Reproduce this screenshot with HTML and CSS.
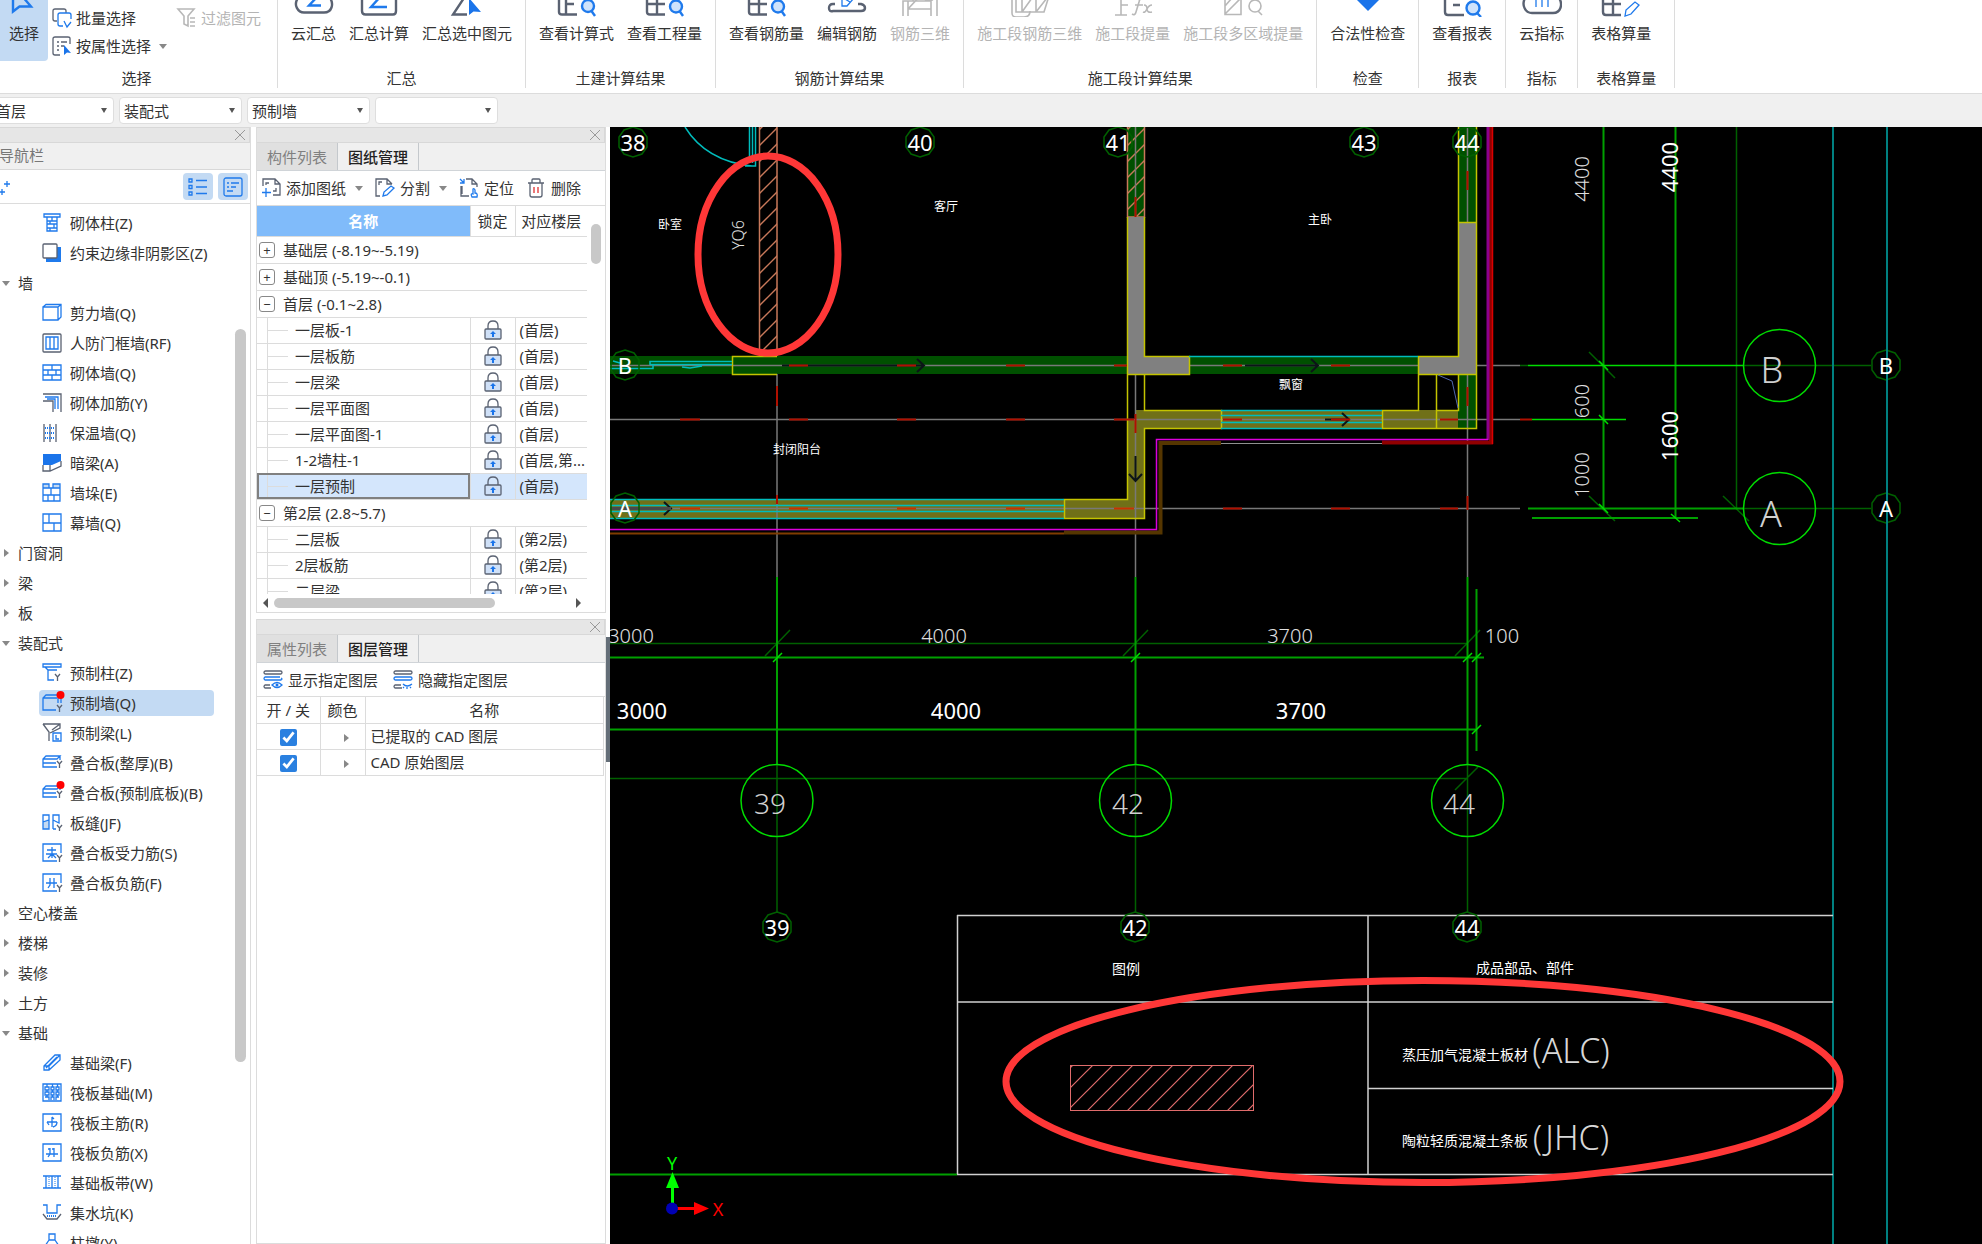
FILE: index.html
```html
<!DOCTYPE html>
<html lang="zh-CN">
<head>
<meta charset="utf-8">
<title>装配式算量 - 图纸管理</title>
<link rel="stylesheet" href="styles.css">
</head>
<body>
<svg class="sprite" aria-hidden="true">
  <!-- ribbon -->
  <symbol id="r-select" viewBox="0 0 36 17"><path d="M7 -10V11.500L13.500 6.500H25L16 -4" class="b2"/></symbol>
  <symbol id="r-cloud" viewBox="0 0 40 17"><path d="M4 -2C-1 5 4 12.500 10 12.500H30C38 12.500 40 4 36 -2" class="g2"/><path d="M24 -4L15 5.500H27" class="b2"/></symbol>
  <symbol id="r-sum" viewBox="0 0 40 17"><path d="M3 -2V11Q3 14.500 6.500 14.500H34Q37 14.500 37 11V-2" class="g2"/><path d="M22 -4L12 7H28" class="b2"/></symbol>
  <symbol id="r-pick" viewBox="0 0 40 17"><path d="M17 -2L6 14.500H20" class="g2"/><path d="M22 -2V15L26.500 11.500L34 12Z" class="bf"/></symbol>
  <symbol id="r-calc" viewBox="0 0 40 17"><path d="M2 -2V12Q2 14.500 5 14.500H20M9 -2V14M9 4H17" class="g2"/><circle cx="31" cy="6" r="6" class="lens"/><path d="M34.500 11L38 16" class="b2"/></symbol>
  <symbol id="r-grid" viewBox="0 0 40 17"><path d="M2 -2V12Q2 14.500 5 14.500H20M12 -2V14M2 4H20" class="g2"/><circle cx="31" cy="6.500" r="6" class="lens"/><path d="M34.500 11L38 16" class="b2"/></symbol>
  <symbol id="r-edit" viewBox="0 0 40 17"><path d="M8 4H6Q2 4 2 8T6 11H34Q38 11 38 8T34 4H31" class="g2"/><path d="M15 -2V6H20L27 -2M18 -1L23 2" class="b1"/></symbol>
  <symbol id="r-3d" viewBox="0 0 40 17"><path d="M3 16V1H31L37 -4M8 16V1M13 1V-4L31 1M31 16V1M37 16V-4M8 9H31M8 9L20 -4" class="d1"/></symbol>
  <symbol id="r-seg3d" viewBox="0 0 40 17"><path d="M2 -2V13Q2 17 6 17H14Q20 17 20 11M6 -2V12H34L39 -4M12 12V-2M26 12V-2M12 12L22 -2M26 12L37 -2" class="d1"/></symbol>
  <symbol id="r-fx" viewBox="0 0 40 17"><path d="M2 15H14M8 15V-2M8 5H15M31 -1Q27 -3 26 2L23 12Q22 16 19 14M22 5H30M31 5Q34 5 34 9T39 12M39 5Q36 5 34 9T30 12" class="d1"/></symbol>
  <symbol id="r-multi" viewBox="0 0 40 17"><path d="M2 -2V14.500H18V-2M2 14L18 -2M2 6L9 -2" class="d1"/><circle cx="32" cy="6" r="6" class="d1"/><path d="M35 11L39 15" class="d1"/></symbol>
  <symbol id="r-check" viewBox="0 0 40 17"><path d="M9 0L20 11L31 0Z" class="bf"/></symbol>
  <symbol id="r-report" viewBox="0 0 40 17"><path d="M3 -2V12Q3 15 6 15H22M11 5H18" class="g2"/><circle cx="31" cy="8" r="6.500" class="lens"/><path d="M35 13L39 17" class="b2"/></symbol>
  <symbol id="r-index" viewBox="0 0 40 17"><path d="M3 -2C-1 6 4 13 10 13H31C39 13 41 4 37 -2" class="g2"/><path d="M14 -2V7M20 -2V7M26 -2V7" class="b1"/></symbol>
  <symbol id="r-table" viewBox="0 0 40 17"><path d="M2 -2V12Q2 15 5 15H20M12 -2V14M2 4H20" class="g2"/><path d="M24 16L25 10L34 2L38 5L30 14Z" class="b1"/></symbol>
  <symbol id="s-batch" viewBox="0 0 20 20"><path d="M14 5V3Q14 1 12 1H3Q1 1 1 3V11Q1 13 3 13H5" class="g1"/><path d="M19 11V7Q19 5 17 5H8Q6 5 6 7V16Q6 18 8 18H11M12 13L15 19L19 14" class="b1"/></symbol>
  <symbol id="s-prop" viewBox="0 0 20 20"><path d="M18 8V2.500Q18 1 16 1H3Q1 1 1 3V17Q1 19 3 19H8M5 6H7M9 6H15M5 10H7M9 10H12M5 14H7" class="g1"/><path d="M12 9V19L15 16.500L19 17Z" class="bf"/></symbol>
  <symbol id="s-filter" viewBox="0 0 20 20"><path d="M1 1H17L11 8V18L7 16V8ZM13 10H18M13 14H18M13 18H18" class="d1"/></symbol>
  <!-- drawing toolbar -->
  <symbol id="t-add" viewBox="0 0 20 20"><path d="M2 8V1H14L19 6V17H12M14 1V6H19M5 7V5H8M15 10V13H12" class="g1"/><path d="M5 10V19M1 14.500H10" class="b1"/></symbol>
  <symbol id="t-split" viewBox="0 0 20 20"><path d="M5 18H1V1H12L17 6M12 1V6H17M4 7V4H7" class="g1"/><path d="M8 18L9 14L16 8L19 10L12 17Z" class="b1"/></symbol>
  <symbol id="t-locate" viewBox="0 0 20 20"><path d="M7 1H13L18 6V9M13 1V6H18M2 8V18H10M3 8V16" class="g1"/><path d="M1 1L5 5M5 1V5H1M13 19Q11 15 14 16V11Q15 10 16 12V15Q19 15 18 19Z" class="b1"/></symbol>
  <symbol id="t-del" viewBox="0 0 20 20"><path d="M2 5H18M6 5V2Q6 1 7 1H13Q14 1 14 2V5M4 5V17Q4 19 6 19H14Q16 19 16 17V5" class="g1"/><path d="M8 9V15M12 9V15" class="red"/></symbol>
  <symbol id="t-show" viewBox="0 0 20 20"><rect x="1" y="1" width="18" height="3" rx="1.500" class="g1"/><path d="M18 8Q20 9 18 10H2Q0 8.500 2 7H17" class="b1"/><path d="M8 18H2Q0 16.500 2 15H7" class="g1"/><path d="M9 15Q14 10 19 15Q14 20 9 15Z" class="b1"/><circle cx="14" cy="15" r="1.500" class="bf"/></symbol>
  <symbol id="t-hide" viewBox="0 0 20 20"><rect x="1" y="1" width="18" height="3" rx="1.500" class="g1"/><rect x="1" y="7" width="18" height="3" rx="1.500" class="b1"/><path d="M9 18H2Q0 16.500 2 15H8" class="g1"/><path d="M10 14Q14 18 19 14M11 17L10 18M14 17V19M17 17L18 18" class="b1"/></symbol>
  <symbol id="lock" viewBox="0 0 20 20"><path d="M5 9V6Q5 1 10 1T15 6V9" class="g1"/><rect x="2" y="9" width="16" height="10" rx="1" class="lockbox"/><path d="M10 11L13 14H11V17H9V14H7Z" class="bf"/></symbol>
  <!-- component tree -->
  <symbol id="n-col" viewBox="0 0 20 20"><path d="M2 1H18V4H2ZM5 4V18H15V4M5 8H15M5 11H15M5 15H15M10 4V8M8 8V11M12 11V15M8 15V18" class="b1"/></symbol>
  <symbol id="n-edge" viewBox="0 0 20 20"><path d="M17 4V17H4" class="bedge"/><rect x="1" y="1" width="14" height="14" rx="1" class="g1w"/></symbol>
  <symbol id="n-wall" viewBox="0 0 20 20"><path d="M1 4H16V17H1ZM1 4L4 1.500H19V14L16 17M16 4L19 1.500" class="b1"/></symbol>
  <symbol id="n-door" viewBox="0 0 20 20"><rect x="1" y="1" width="18" height="18" rx="1" class="g1"/><path d="M4 4H16V16H4ZM8 4V16M12 4V16" class="b1"/></symbol>
  <symbol id="n-brick" viewBox="0 0 20 20"><path d="M1 2H19V17H1ZM1 7H19M1 12H19M10 2V7M6 7V12M14 7V12M10 12V17" class="b1"/></symbol>
  <symbol id="n-rebar" viewBox="0 0 20 20"><path d="M1 1H19V19M1 8H11V19" class="g1"/><path d="M3 4H16V16M5 6H13V16" class="b1"/></symbol>
  <symbol id="n-insul" viewBox="0 0 20 20"><path d="M2 1V19M8 1V19M14 1V19" class="g1"/><path d="M3 5H13M3 10H13M3 15H13" class="bdot"/></symbol>
  <symbol id="n-beam" viewBox="0 0 20 20"><path d="M1 1H19V8L10 12H1Z" class="bf"/><path d="M1 12V18H8L19 13V8M8 18V12" class="g1"/></symbol>
  <symbol id="n-stack" viewBox="0 0 20 20"><path d="M1 1H7V5H1ZM11 1H18V5H11Z" class="bl"/><path d="M1 5V18H18V1H11V5H7V1H1V5H18M1 12H18M9 5V12M6 12V18M12 12V18" class="b1"/></symbol>
  <symbol id="n-curtain" viewBox="0 0 20 20"><path d="M1 1H19V18H1ZM1 10H19M7 1V10M12 10V18" class="b1"/></symbol>
  <symbol id="n-pcol" viewBox="0 0 20 20"><path d="M1 1H19V4H1ZM3 4L6 7H15M6 7V17H12" class="b1"/><path d="M13 11L15.500 14L18 11M15.500 14V18" class="g1"/></symbol>
  <symbol id="n-pwall" viewBox="0 0 20 20"><path d="M14 17H1V5L4 2H16M1 5H15M16 5V10M19 5V10" class="b1"/><path d="M15 12L17.500 15L20 12M17.500 15V19" class="g1"/></symbol>
  <symbol id="n-pwallr" viewBox="0 0 20 20"><use href="#n-pwall"/><circle cx="18.500" cy="2" r="4" fill="red"/></symbol>
  <symbol id="n-pbeam" viewBox="0 0 20 20"><path d="M1 1H18V5L8 10M1 1L7 9V18M10 7L18 1" class="g1"/><path d="M11 10H19V18H11ZM14 12V16H17" class="b1"/></symbol>
  <symbol id="n-slab" viewBox="0 0 20 20"><path d="M15 14H1V6L4 3H18L15 6H1M1 10H14M18 3V7" class="b1"/><path d="M15 8L17.500 11L20 8M17.500 11V15" class="g1"/></symbol>
  <symbol id="n-slabr" viewBox="0 0 20 20"><use href="#n-slab"/><circle cx="18.500" cy="2" r="4" fill="red"/></symbol>
  <symbol id="n-seam" viewBox="0 0 20 20"><path d="M1 8L7 6V16H1Z" class="bl"/><path d="M1 2H7V16H1ZM1 9L7 7M11 16V2H17V10L11 7M11 16H14" class="b1"/><path d="M15 12L17.500 15L20 12M17.500 15V18" class="g1"/></symbol>
  <symbol id="n-sforce" viewBox="0 0 20 20"><path d="M15 18H1V1H19V10M5 7H14M4 11H15M10 4V15M10 11L6 15M10 11L14 15" class="b1"/><path d="M15 12L17.500 15L20 12M17.500 15V19" class="g1"/></symbol>
  <symbol id="n-sneg" viewBox="0 0 20 20"><path d="M15 18H1V1H19V10M4 10H15M8 5V12L6 15M12 5V15" class="b1"/><path d="M15 12L17.500 15L20 12M17.500 15V19" class="g1"/></symbol>
  <symbol id="n-fbeam" viewBox="0 0 20 20"><path d="M2 13L13 2H18V7L7 17H2ZM2 13H7V17M7 13L18 2M4 15L15 4" class="b1"/></symbol>
  <symbol id="n-raft" viewBox="0 0 20 20"><path d="M1 1H19V18H1Z" class="b1"/><path d="M3 4H7V7H3ZM9 4H12V7H9ZM14 4H17V7H14ZM3 9H7V12H3ZM9 9H12V12H9ZM14 9H17V12H14ZM3 14H7V17M9 17V14H12V17M14 17V14H17M5 1V4M10.500 1V4M15.500 1V4M5 7V9M10.500 7V9M15.500 7V9M5 12V14M10.500 12V14M15.500 12V14" class="b1"/></symbol>
  <symbol id="n-rmain" viewBox="0 0 20 20"><path d="M1 1H19V18H1ZM5 9H15M10 4V14M10 4L12 6M15 9Q15 13 11 14M5 9L7 12" class="b1"/></symbol>
  <symbol id="n-rneg" viewBox="0 0 20 20"><path d="M1 1H19V18H1ZM4 11H16M8 5V11L6 14M12 5V14M8 6H6M12 6H10" class="b1"/></symbol>
  <symbol id="n-strip" viewBox="0 0 20 20"><path d="M1 3H19M1 15H19M4 3V15M10 3V15M16 3V15" class="b1"/><path d="M7 4V15M13 4V15" class="bdash"/></symbol>
  <symbol id="n-pit" viewBox="0 0 20 20"><path d="M1 2H5V10H15V2H19" class="b1"/><path d="M1 11L5 16H15L19 11" class="g1"/><path d="M5 13H15" class="bdot"/></symbol>
  <symbol id="n-pier" viewBox="0 0 20 20"><path d="M7 1H13V7H7ZM7 7L3 13V18H17V13L13 7" class="b1"/></symbol>
  <symbol id="v-list" viewBox="0 0 20 20"><path d="M1 2H4V5H1ZM1 8.500H4V11.500H1ZM1 15H4V18H1ZM8 3.500H19M8 10H19M8 16.500H19" class="b1"/></symbol>
  <symbol id="v-card" viewBox="0 0 20 20"><rect x="1" y="1" width="18" height="18" rx="2" class="b1"/><path d="M4 6H6M8 6H16M4 10H6M8 10H13M4 14H10" class="b1"/></symbol>
</svg>

<header class="ribbon">
  <section class="group group-select">
    <div class="tools">
      <button class="big active"><svg class="ri"><use href="#r-select"/></svg>选择</button>
      <div class="small-tools">
        <button class="small"><svg class="ic"><use href="#s-batch"/></svg>批量选择</button>
        <button class="small" disabled><svg class="ic"><use href="#s-filter"/></svg>过滤图元</button>
        <button class="small"><svg class="ic"><use href="#s-prop"/></svg>按属性选择<i class="caret"></i></button>
      </div>
    </div>
    <h2>选择</h2>
  </section>
  <section class="group"><div class="tools">
    <button class="big"><svg class="ri"><use href="#r-cloud"/></svg>云汇总</button>
    <button class="big"><svg class="ri"><use href="#r-sum"/></svg>汇总计算</button>
    <button class="big"><svg class="ri"><use href="#r-pick"/></svg>汇总选中图元</button>
  </div><h2>汇总</h2></section>
  <section class="group"><div class="tools">
    <button class="big"><svg class="ri"><use href="#r-calc"/></svg>查看计算式</button>
    <button class="big"><svg class="ri"><use href="#r-grid"/></svg>查看工程量</button>
  </div><h2>土建计算结果</h2></section>
  <section class="group"><div class="tools">
    <button class="big"><svg class="ri"><use href="#r-grid"/></svg>查看钢筋量</button>
    <button class="big"><svg class="ri"><use href="#r-edit"/></svg>编辑钢筋</button>
    <button class="big" disabled><svg class="ri"><use href="#r-3d"/></svg>钢筋三维</button>
  </div><h2>钢筋计算结果</h2></section>
  <section class="group"><div class="tools">
    <button class="big" disabled><svg class="ri"><use href="#r-seg3d"/></svg>施工段钢筋三维</button>
    <button class="big" disabled><svg class="ri"><use href="#r-fx"/></svg>施工段提量</button>
    <button class="big" disabled><svg class="ri"><use href="#r-multi"/></svg>施工段多区域提量</button>
  </div><h2>施工段计算结果</h2></section>
  <section class="group"><div class="tools">
    <button class="big"><svg class="ri"><use href="#r-check"/></svg>合法性检查</button>
  </div><h2>检查</h2></section>
  <section class="group"><div class="tools">
    <button class="big"><svg class="ri"><use href="#r-report"/></svg>查看报表</button>
  </div><h2>报表</h2></section>
  <section class="group"><div class="tools">
    <button class="big"><svg class="ri"><use href="#r-index"/></svg>云指标</button>
  </div><h2>指标</h2></section>
  <section class="group group-last"><div class="tools">
    <button class="big"><svg class="ri"><use href="#r-table"/></svg>表格算量</button>
  </div><h2>表格算量</h2></section>
</header>

<div class="combos">
  <div class="combo"><select aria-label="楼层"><option>首层</option></select></div>
  <div class="combo"><select aria-label="构件大类"><option>装配式</option></select></div>
  <div class="combo"><select aria-label="构件类型"><option>预制墙</option></select></div>
  <div class="combo"><select aria-label="构件"><option></option></select></div>
</div>

<main class="work">
  <aside class="nav">
    <div class="strip"><button class="close" aria-label="关闭"></button></div>
    <h2 class="nav-title">导航栏</h2>
    <div class="nav-bar">
      <button class="spark" aria-label="新建"><svg viewBox="0 0 12 16"><path d="M7 1V7M4 4H10M2 9V15M-1 12H5" class="b1"/></svg></button>
      <button class="view" aria-label="列表"><svg class="ic"><use href="#v-list"/></svg></button>
      <button class="view" aria-label="卡片"><svg class="ic"><use href="#v-card"/></svg></button>
    </div>
    <div class="nav-body">
      <ul class="tree">
        <li><a href="#"><svg class="ic"><use href="#n-col"/></svg>砌体柱(Z)</a></li>
        <li><a href="#"><svg class="ic"><use href="#n-edge"/></svg>约束边缘非阴影区(Z)</a></li>
        <li class="cat open"><button>墙</button></li>
        <li><a href="#"><svg class="ic"><use href="#n-wall"/></svg>剪力墙(Q)</a></li>
        <li><a href="#"><svg class="ic"><use href="#n-door"/></svg>人防门框墙(RF)</a></li>
        <li><a href="#"><svg class="ic"><use href="#n-brick"/></svg>砌体墙(Q)</a></li>
        <li><a href="#"><svg class="ic"><use href="#n-rebar"/></svg>砌体加筋(Y)</a></li>
        <li><a href="#"><svg class="ic"><use href="#n-insul"/></svg>保温墙(Q)</a></li>
        <li><a href="#"><svg class="ic"><use href="#n-beam"/></svg>暗梁(A)</a></li>
        <li><a href="#"><svg class="ic"><use href="#n-stack"/></svg>墙垛(E)</a></li>
        <li><a href="#"><svg class="ic"><use href="#n-curtain"/></svg>幕墙(Q)</a></li>
        <li class="cat"><button>门窗洞</button></li>
        <li class="cat"><button>梁</button></li>
        <li class="cat"><button>板</button></li>
        <li class="cat open"><button>装配式</button></li>
        <li><a href="#"><svg class="ic"><use href="#n-pcol"/></svg>预制柱(Z)</a></li>
        <li><a href="#" class="current"><svg class="ic"><use href="#n-pwallr"/></svg>预制墙(Q)</a></li>
        <li><a href="#"><svg class="ic"><use href="#n-pbeam"/></svg>预制梁(L)</a></li>
        <li><a href="#"><svg class="ic"><use href="#n-slab"/></svg>叠合板(整厚)(B)</a></li>
        <li><a href="#"><svg class="ic"><use href="#n-slabr"/></svg>叠合板(预制底板)(B)</a></li>
        <li><a href="#"><svg class="ic"><use href="#n-seam"/></svg>板缝(JF)</a></li>
        <li><a href="#"><svg class="ic"><use href="#n-sforce"/></svg>叠合板受力筋(S)</a></li>
        <li><a href="#"><svg class="ic"><use href="#n-sneg"/></svg>叠合板负筋(F)</a></li>
        <li class="cat"><button>空心楼盖</button></li>
        <li class="cat"><button>楼梯</button></li>
        <li class="cat"><button>装修</button></li>
        <li class="cat"><button>土方</button></li>
        <li class="cat open"><button>基础</button></li>
        <li><a href="#"><svg class="ic"><use href="#n-fbeam"/></svg>基础梁(F)</a></li>
        <li><a href="#"><svg class="ic"><use href="#n-raft"/></svg>筏板基础(M)</a></li>
        <li><a href="#"><svg class="ic"><use href="#n-rmain"/></svg>筏板主筋(R)</a></li>
        <li><a href="#"><svg class="ic"><use href="#n-rneg"/></svg>筏板负筋(X)</a></li>
        <li><a href="#"><svg class="ic"><use href="#n-strip"/></svg>基础板带(W)</a></li>
        <li><a href="#"><svg class="ic"><use href="#n-pit"/></svg>集水坑(K)</a></li>
        <li><a href="#"><svg class="ic"><use href="#n-pier"/></svg>柱墩(Y)</a></li>
      </ul>
      <div class="vtrack"><div class="thumb"></div></div>
    </div>
  </aside>

  <div class="dock">
    <section class="panel panel-drawings">
      <div class="strip"><button class="close" aria-label="关闭"></button></div>
      <div class="tabs"><button>构件列表</button><button class="on">图纸管理</button></div>
      <div class="bar">
        <button><svg class="ic"><use href="#t-add"/></svg>添加图纸<i class="caret"></i></button>
        <button><svg class="ic"><use href="#t-split"/></svg>分割<i class="caret"></i></button>
        <button><svg class="ic"><use href="#t-locate"/></svg>定位</button>
        <button><svg class="ic"><use href="#t-del"/></svg>删除</button>
      </div>
      <div class="list">
        <div class="list-clip">
          <table class="drawings">
            <colgroup><col><col class="c-lock"><col class="c-floor"></colgroup>
            <thead><tr><th class="sorted">名称</th><th>锁定</th><th>对应楼层</th></tr></thead>
            <tbody>
              <tr class="grp"><td colspan="3"><button class="exp">+</button>基础层 (-8.19~-5.19)</td></tr>
              <tr class="grp"><td colspan="3"><button class="exp">+</button>基础顶 (-5.19~-0.1)</td></tr>
              <tr class="grp"><td colspan="3"><button class="exp">−</button>首层 (-0.1~2.8)</td></tr>
              <tr><td>一层板-1</td><td><svg class="ic"><use href="#lock"/></svg></td><td>(首层)</td></tr>
              <tr><td>一层板筋</td><td><svg class="ic"><use href="#lock"/></svg></td><td>(首层)</td></tr>
              <tr><td>一层梁</td><td><svg class="ic"><use href="#lock"/></svg></td><td>(首层)</td></tr>
              <tr><td>一层平面图</td><td><svg class="ic"><use href="#lock"/></svg></td><td>(首层)</td></tr>
              <tr><td>一层平面图-1</td><td><svg class="ic"><use href="#lock"/></svg></td><td>(首层)</td></tr>
              <tr><td>1-2墙柱-1</td><td><svg class="ic"><use href="#lock"/></svg></td><td>(首层,第...</td></tr>
              <tr class="sel"><td>一层预制</td><td><svg class="ic"><use href="#lock"/></svg></td><td>(首层)</td></tr>
              <tr class="grp"><td colspan="3"><button class="exp">−</button>第2层 (2.8~5.7)</td></tr>
              <tr><td>二层板</td><td><svg class="ic"><use href="#lock"/></svg></td><td>(第2层)</td></tr>
              <tr><td>2层板筋</td><td><svg class="ic"><use href="#lock"/></svg></td><td>(第2层)</td></tr>
              <tr><td>二层梁</td><td><svg class="ic"><use href="#lock"/></svg></td><td>(第2层)</td></tr>
            </tbody>
          </table>
        </div>
        <div class="vtrack"><div class="thumb"></div></div>
      </div>
      <div class="htrack"><i class="arr-l"></i><div class="thumb"></div><i class="arr-r"></i></div>
    </section>

    <section class="panel panel-layers">
      <div class="strip"><button class="close" aria-label="关闭"></button></div>
      <div class="tabs"><button>属性列表</button><button class="on">图层管理</button></div>
      <div class="bar">
        <button><svg class="ic"><use href="#t-show"/></svg>显示指定图层</button>
        <button><svg class="ic"><use href="#t-hide"/></svg>隐藏指定图层</button>
      </div>
      <table class="layers">
        <colgroup><col class="c-on"><col class="c-lock"><col></colgroup>
        <thead><tr><th>开 / 关</th><th>颜色</th><th>名称</th></tr></thead>
        <tbody>
          <tr><td><input type="checkbox" id="ly1" checked></td><td><i class="tri"></i></td><td><label for="ly1">已提取的 CAD 图层</label></td></tr>
          <tr><td><input type="checkbox" id="ly2" checked></td><td><i class="tri"></i></td><td><label for="ly2">CAD 原始图层</label></td></tr>
        </tbody>
      </table>
    </section>
  </div>

  <div class="splitter"><button class="grip" aria-label="收起"></button></div>

  <div class="canvas">
    <svg class="cad" role="img" aria-label="一层预制平面图">
      <defs>
        <pattern id="hatch" width="16" height="16" patternUnits="userSpaceOnUse" x="759" y="130"><path d="M0 16L16 0M-2 2L2 -2M14 18L18 14" stroke="#c8785a" stroke-width="1.400"/></pattern>
        <pattern id="hatch2" width="20" height="20" patternUnits="userSpaceOnUse" x="1067" y="1111"><path d="M0 20L20 0M-2 2L2 -2M18 22L22 18" stroke="#e06c6c" stroke-width="1.200"/></pattern>
        <polygon id="bub" points="0,-15 9,-12 14,-5 14,5 9,12 0,15 -9,12 -14,5 -14,-5 -9,-12"/>
      </defs>
      <g transform="translate(-610 -127)">
        <!-- walls -->
        <g fill="#005000">
          <rect x="610" y="356" width="517" height="18"/><rect x="1127" y="127" width="17" height="90"/>
          <rect x="1189" y="356" width="229" height="18"/><rect x="1458" y="127" width="18" height="95"/><rect x="1458" y="374" width="18" height="54"/>
        </g>
        <path d="M1127 419H1135V410H1458V428H1144V518H610V499H1127Z" fill="#707018"/>
        <rect x="759" y="127" width="18" height="229" fill="url(#hatch)"/><path d="M759.500 127V356M777 127V356" class="brown"/>
        <rect x="1127" y="127" width="17" height="90" fill="url(#hatch)"/><path d="M1127.500 127V217H1144.500V127" class="brown"/>
        <path d="M1127 217H1144V356H1189V374H1127ZM1458 222H1476V374H1418V356H1458Z" fill="#808080"/>
        <!-- axes -->
        <g stroke="#787878" stroke-width="1.500">
          <path d="M610 365.500H1127M1189 365.500H1418M1476 365.500H1520M610 419.500H1520M610 508.500H1520M777 374V577M1135.500 127V217M1135.500 374V577M1467.500 127V222M1467.500 374V577"/>
        </g>
        <g class="yel">
          <path d="M777 356.500H732.500V374.500H777M1127.500 217V499.500H1064.500V518.500H1144.500V428.500H1221.500V410.500H1144.500V374.500M1144.500 217V356.500H1189.500V374.500H1127M1458.500 127V222.500H1476.500M1476.500 127V428.500H1382.500V410.500H1418.500V374.500H1476M1458.500 222V356.500H1418.500V374M1436.500 374V428M1436 410.500H1458.500V374"/>
        </g>
        <g class="cyan">
          <path d="M685 127Q706 161 752 166M749.500 127V163M752.500 127V163M755.500 127V166H745M613 361L620 363M610 368.500H653V365M650 365V361.500H732M650 364.500H732M682 367L690 368L702 366"/>
          <path d="M1189 356.500H1418M1221 410.500H1382M1221 415.500H1382M1221 422.500H1382M1221 428.500H1382M610 499.500H1064M610 505.500H1064M610 511.500H1064M610 518.500H1064"/>
        </g>
        <path d="M1438 375L1452 381L1458 408" stroke="#5068b0" fill="none"/>
        <g stroke="#0c1418" stroke-width="2" fill="none">
          <path d="M782 365.500H924M917 359L924 365.500L917 372M1245 365.500H1318M1311 359L1318 365.500L1311 372M1325 419.500H1349M1342 413L1349 419.500L1342 426M664 502L671 508.500L664 515M1135.500 456V480M1129 474L1135.500 481L1142 474"/>
        </g>
        <path d="M610 508.500H671" stroke="#484848" stroke-width="3"/>
        <g stroke="#b01000" stroke-width="2">
          <path d="M789 365.500H808M870 365.500H888M978 365.500H1025M1114 365.500H1127M1223 365.500H1242M1331 365.500H1350" class="off"/>
          <path d="M789 365.500H808M897 365.500H916M1006 365.500H1025M1114 365.500H1127M1223 365.500H1242M1331 365.500H1350M680 419.500H700M789 419.500H808M897 419.500H916M1006 419.500H1025M1114 419.500H1134M1223 419.500H1242M1331 419.500H1350M1440 419.500H1458M1520 419.500H1532M1223 508.500H1242M1331 508.500H1350M1440 508.500H1458"/>
          <path d="M777 386V406M777 495V504M1135.500 197V217M1135.500 414V433M1467.500 171V190M1467.500 387V406M1467.500 496V510"/>
        </g>
        <path d="M680 508.500H700M789 508.500H808M897 508.500H916M1006 508.500H1025M1114 508.500H1134" stroke="#c83200" stroke-width="2"/>
        <path d="M610 533.500H1064" stroke="#803c00" stroke-width="2"/>
        <path d="M1064 532.500H1160.500V443H1221" stroke="#553600" stroke-width="4" fill="none"/>
        <path d="M1221 443.500H1382" stroke="#909090"/>
        <path d="M1382 442.500H1491V127" stroke="#900000" stroke-width="4" fill="none"/><path d="M1492.500 444V127" stroke="#dc0000" stroke-width="1.500"/>
        <path d="M1488 440V127" stroke="#8c008c" stroke-width="3"/>
        <path d="M610 529.500H1156.500V439.500H1488" stroke="#dc00dc" stroke-width="1.500" fill="none"/>
        <!-- dimension lines -->
        <g class="gd">
          <path d="M1520 365.500H1528M1743 365.500H1871M1743 508.500H1871M1736.500 127V508M610 643.500H1467M610 778.500H1467M777 764V912M1135.500 764V912M1467.500 764V912M1589 352L1615 378M1589 496L1615 521M1723 496L1749 521M765 656L790 630M1123 656L1148 630M1455 656L1480 630M1455 790L1478 767"/>
          <use href="#bub" x="633" y="142"/><use href="#bub" x="920" y="142"/><use href="#bub" x="1118" y="142"/><use href="#bub" x="1364" y="142"/><use href="#bub" x="1467" y="142"/>
          <use href="#bub" x="625" y="365"/><use href="#bub" x="625" y="508"/><use href="#bub" x="1886" y="365"/><use href="#bub" x="1886" y="508"/>
          <use href="#bub" x="777" y="927"/>
        </g>
        <g class="gm">
          <path d="M1603.500 127V508M1675.500 127V518M1528 508.500H1743M1532 518H1698M610 657.500H1484M610 729.500H1476M777 577V764M1135.500 577V764M1467.500 577V764M1476.500 589V751M610 1174.500H957"/>
        </g>
        <g class="gl">
          <path d="M1528 365.500H1743M1532 419.500H1626M1599 361L1608 370M1599 415L1608 424M1599 504L1608 513M1671 514L1680 522M773 662L782 653M1131 662L1140 653M1463 662L1472 653M1472 662L1481 653M1472 734L1481 725"/>
          <circle cx="1779.500" cy="365.500" r="36"/><circle cx="1779.500" cy="508.500" r="36"/>
          <circle cx="777" cy="800.500" r="36"/><circle cx="1135.500" cy="800.500" r="36"/><circle cx="1467.500" cy="800.500" r="36"/>
        </g>
        <path d="M1833 127V1244M1887 127V1244" stroke="#008080" stroke-width="2"/>
        <!-- legend table -->
        <path d="M957.500 915V1174M957 915.500H1833M957 1002H1833M1368 915V1174M1368 1088.500H1833M957 1174.500H1833" stroke="#d0d0d0" stroke-width="1.500"/>
        <g class="gd"><use href="#bub" x="1135" y="927"/><use href="#bub" x="1467" y="927"/></g>
        <rect x="1070.500" y="1065.500" width="183" height="45" fill="url(#hatch2)" stroke="#e06c6c"/>
        <!-- labels -->
        <g class="axis">
          <text x="633" y="142">38</text><text x="920" y="142">40</text><text x="1118" y="142">41</text><text x="1364" y="142">43</text><text x="1467" y="142">44</text>
          <text x="625" y="365">B</text><text x="625" y="508">A</text><text x="1886" y="365">B</text><text x="1886" y="508">A</text>
          <text x="777" y="927">39</text><text x="1135" y="927">42</text><text x="1467" y="927">44</text>
          <text x="642" y="710">3000</text><text x="956" y="710">4000</text><text x="1301" y="710">3700</text>
          <text transform="translate(1669 167) rotate(-90)">4400</text><text transform="translate(1669 436) rotate(-90)">1600</text>
        </g>
        <g class="dim">
          <text x="631" y="635">3000</text><text x="944" y="635">4000</text><text x="1290" y="635">3700</text><text x="1502" y="635">100</text>
          <text transform="translate(1581 179) rotate(-90)">4400</text><text transform="translate(1581 401) rotate(-90)">600</text><text transform="translate(1581 475) rotate(-90)">1000</text>
          <text transform="translate(738 235) rotate(-90)" class="mark">YQ6</text>
        </g>
        <g class="num"><text x="770" y="803">39</text><text x="1128" y="803">42</text><text x="1459" y="803">44</text></g>
        <g class="letter"><text x="1772" y="369">B</text><text x="1771" y="513">A</text></g>
        <g class="room">
          <text x="670" y="224">卧室</text><text x="946" y="206">客厅</text><text x="1320" y="219">主卧</text><text x="1291" y="384">飘窗</text><text x="797" y="449">封闭阳台</text>
        </g>
        <g class="cell"><text x="1126" y="968">图例</text><text x="1525" y="967">成品部品、部件</text><text x="1465" y="1054">蒸压加气混凝土板材</text><text x="1465" y="1140">陶粒轻质混凝土条板</text></g>
        <g class="code"><text x="1571" y="1050">(ALC)</text><text x="1571" y="1137">(JHC)</text></g>
        <!-- review marks -->
        <g fill="none" stroke="#ff3737" stroke-width="7"><ellipse cx="768" cy="254.500" rx="70" ry="98.500"/><ellipse cx="1423" cy="1081.500" rx="417" ry="101"/></g>
        <!-- UCS -->
        <path d="M672.500 1208V1184" stroke="#00ff00" stroke-width="3"/><path d="M666 1188L672.500 1172L679 1188Z" fill="#00ff00"/>
        <path d="M672 1208.500H698" stroke="#ff0000" stroke-width="3"/><path d="M694 1202L709 1208.500L694 1215Z" fill="#ff0000"/>
        <circle cx="672" cy="1208.500" r="6" fill="#0000b4"/>
        <text x="672" y="1163" class="ucs" fill="#00ff00">Y</text><text x="718" y="1209" class="ucs" fill="#ff0000">X</text>
      </g>
    </svg>
  </div>
</main>
</body>
</html>
```
FILE: styles.css
```css
* { box-sizing: border-box; }

body {
  margin: 0;
  height: 100vh;
  display: flex;
  flex-direction: column;
  overflow: hidden;
  background: #fff;
  color: #333;
  font: 15px/22px "Noto Sans", "Noto Sans CJK SC", sans-serif;
}

button, select { font: inherit; color: inherit; border: 0; background: none; padding: 0; margin: 0; }
button:disabled { color: #b4b4b4; }
h2 { margin: 0; font: inherit; }
a { color: inherit; text-decoration: none; }

.sprite { width: 0; height: 0; position: absolute; }
symbol, .ic { overflow: visible; }
.ic { width: 20px; height: 20px; flex: none; display: block; }
.g1, .g2, .b1, .b2, .d1, .red { fill: none; stroke-width: 1.3; stroke: #5a6272; }
.g2, .b2 { stroke-width: 2.4; }
.b1, .b2 { stroke: #1f7aec; }
.d1 { stroke: #b8b8b8; stroke-width: 1.6; }
.red { stroke: #e03030; }
.bf { fill: #1a74ea; }
.bl { fill: #c5daf2; }
.bdot, .bdash { fill: none; stroke: #1f7aec; stroke-width: 2; stroke-dasharray: 1 1; }
.bdash { stroke-width: 1; }
.bedge { fill: none; stroke: #1f7aec; stroke-width: 4; }
.g1w { fill: #fff; stroke: #5a6272; stroke-width: 1.3; }
.lens { fill: #cfe3fb; stroke: #1f7aec; stroke-width: 2.4; }
.lockbox { fill: #cfe0f7; stroke: #5a6272; stroke-width: 1.3; }
.caret { border: 4px solid transparent; border-top: 5px solid #888; border-bottom: 0; margin-left: 4px; }

/* ribbon */
.ribbon { display: flex; flex: none; height: 94px; padding-bottom: 5px; border-bottom: 1px solid #dcdcdc; }
.group { display: flex; flex-direction: column; justify-content: space-between; flex: none; padding: 0 13px; border-right: 1px solid #dcdcdc; }
.group h2 { text-align: center; line-height: 20px; }
.group-last { min-width: 97px; }
.tools { display: flex; gap: 13px; }
.big { display: flex; flex-direction: column; align-items: center; gap: 5px; white-space: nowrap; }
.ri { width: 40px; height: 17px; }
.group-select { width: 278px; padding: 0; }
.group-select .tools { gap: 4px; }
.group-select h2 { padding-right: 4px; }
.active { width: 48px; height: 61px; padding-left: 10px; padding-right: 10px; background: #c3daf3; border-radius: 0 0 4px 0; }
.small-tools { display: grid; grid-template-columns: 125px auto; align-content: start; row-gap: 6px; padding-top: 7px; }
.small { display: flex; align-items: center; gap: 4px; white-space: nowrap; }

/* combo row */
.combos { display: flex; flex: none; gap: 5px; height: 33px; padding: 3px 0; background: #f0f0f0; margin-left: -9px; }
.combo { width: 123px; position: relative; flex: none; }
.combo select { width: 100%; height: 27px; padding: 0 4px; appearance: none; background: #fff; border: 1px solid #dedede; border-radius: 4px; }
.combo::after { content: ""; position: absolute; right: 7px; top: 11px; border: 3px solid transparent; border-top: 5px solid #555; border-bottom: 0; pointer-events: none; }

/* docked panels */
.work { flex: 1; min-height: 0; display: flex; background: #fff; }
.strip { display: flex; justify-content: flex-end; align-items: center; height: 16px; flex: none; padding-right: 4px; background: #e6e6e6; border: 1px solid #d8d8d8; border-left: 0; }
.close { width: 10px; height: 10px; background: linear-gradient(45deg, transparent 46%, #999 46% 54%, transparent 54%), linear-gradient(-45deg, transparent 46%, #999 46% 54%, transparent 54%); }
.thumb { background: #c8c8c8; border-radius: 6px; }

.nav { width: 251px; flex: none; display: flex; flex-direction: column; border-right: 1px solid #dcdcdc; }
.nav-title { flex: none; height: 27px; padding-top: 1px; background: #f0f0f0; color: #777; text-indent: -1px; border-bottom: 1px solid #d8d8d8; }
.nav-bar { display: flex; flex: none; align-items: center; gap: 5px; height: 34px; padding-right: 2px; border-bottom: 1px solid #dcdcdc; }
.spark { width: 12px; height: 16px; margin-right: auto; }
.view { display: grid; place-items: center; width: 30px; height: 27px; background: #c3daf3; border-radius: 4px; }
.nav-body { flex: 1; min-height: 0; display: flex; padding-top: 4px; overflow: hidden; }
.tree { flex: 1; list-style: none; margin: 0; padding: 0; }
.tree li { height: 30px; padding: 2px 21px 2px 39px; }
.tree a { display: flex; align-items: center; gap: 8px; height: 26px; padding-left: 3px; border-radius: 4px; white-space: nowrap; }
.tree .current { background: #c3daf3; }
.tree .cat { padding-left: 4px; }
.cat button { display: flex; align-items: center; gap: 9px; height: 26px; }
.cat button::before, .tri { content: ""; border: 4px solid transparent; border-left: 5px solid #888; border-right: 0; }
.cat.open button::before { border: 4px solid transparent; border-top: 5px solid #888; border-bottom: 0; margin-left: -2px; margin-right: -1px; }
.nav .vtrack { width: 15px; padding: 121px 4px 0 0; }
.nav .vtrack .thumb { width: 11px; height: 733px; }

.dock { width: 350px; flex: none; display: flex; flex-direction: column; gap: 6px; margin-left: 5px; }
.panel { display: flex; flex-direction: column; min-height: 0; border: solid #dcdcdc; border-width: 0 1px 1px; }
.panel-drawings { flex: 7 1 0; }
.panel-layers { flex: 9 1 0; }
.tabs { display: flex; flex: none; height: 28px; background: #f0f0f0; border-bottom: 1px solid #d0d4d8; }
.tabs button { width: 81px; color: #808080; background: #e0e0e0; border-right: 1px solid #c4c8cc; }
.tabs .on { color: #222; background: #f0f0f0; font-weight: 500; }
.bar { display: flex; flex: none; align-items: center; gap: 12px; height: 35px; padding-left: 4px; border-bottom: 1px solid #dcdcdc; }
.bar button { display: flex; align-items: center; gap: 5px; white-space: nowrap; }
.panel-layers .bar { gap: 15px; height: 34px; padding-left: 6px; }

table { border-collapse: collapse; table-layout: fixed; width: 100%; }
td, th { height: 26px; padding: 0; font-weight: 400; line-height: 20px; white-space: nowrap; border: 1px solid #dcdcdc; }
.list { flex: 1; min-height: 0; display: flex; }
.list-clip { flex: 1; overflow: hidden; }
.c-lock { width: 45px; }
.c-floor { width: 72px; }
.c-on { width: 63px; }
.drawings th { height: 30px; }
.drawings th:first-child, .drawings td:first-child { border-left: 0; }
.drawings th, .drawings td { border-right: 0; border-top: 0; }
.drawings .sorted { background: #80bbfa; color: #fff; font-weight: 700; }
.drawings .ic { margin: 0 auto; }
.drawings td:last-child { padding-left: 4px; }
.drawings td:first-child { padding-left: 38px; background: linear-gradient(#dcdcdc, #dcdcdc) 10px 0 / 1px 100% no-repeat, linear-gradient(#dcdcdc, #dcdcdc) 10px 50% / 21px 1px no-repeat; }
.drawings .grp td { height: 27px; padding-left: 2px; background: none; }
.exp { width: 16px; height: 16px; margin-right: 8px; vertical-align: 1px; border: 1px solid #888; border-radius: 3px; font-size: 13px; line-height: 12px; }
.sel { background: #d4e6fc; }
.drawings .sel td:first-child { outline: 2px solid #808080; outline-offset: -2px; }
.list .vtrack { width: 18px; padding: 18px 4px 0; }
.list .vtrack .thumb { width: 10px; height: 40px; }
.htrack { display: flex; flex: none; align-items: center; height: 18px; padding: 0 24px 0 6px; }
.htrack .thumb { width: 221px; height: 10px; margin: 0 auto 0 6px; }
.arr-l, .arr-r { border: 5px solid transparent; border-right: 5px solid #555; border-left: 0; }
.arr-r { border-left: 5px solid #555; border-right: 0; }

.layers { width: calc(100% - 1px); }
.layers td { text-align: center; }
.layers td:last-child { text-align: left; padding-left: 5px; }
.layers th { border-top: 0; }
.layers th:first-child, .layers td:first-child { border-left: 0; }
.layers input { width: 17px; height: 17px; margin: 0; accent-color: #2a80e0; vertical-align: middle; }
.tri { display: inline-block; margin-left: 8px; }

.splitter { width: 4px; flex: none; padding-top: 510px; }
.grip { display: block; width: 4px; height: 125px; background: #646e78; }

/* drawing area */
.canvas { flex: 1; min-width: 0; background: #000; overflow: hidden; }
.cad { display: block; width: 100%; height: 100%; }
.off { display: none; }
.brown { fill: none; stroke: #c8785a; stroke-width: 1.5; }
.yel { fill: none; stroke: #c4c400; stroke-width: 1.5; }
.cyan { fill: none; stroke: #00bcbc; stroke-width: 1.5; }
.gd { fill: none; stroke: #006000; stroke-width: 1.5; }
.gm { fill: none; stroke: #00a000; stroke-width: 2; }
.gl { fill: none; stroke: #00dc00; stroke-width: 1.5; }
.cad text { text-anchor: middle; dominant-baseline: central; }
.axis { fill: #fff; font-size: 22px; }
.dim { fill: #e0e0e0; font-size: 20px; font-weight: 300; }
.mark { font-size: 16px; }
.num { fill: #d0d0d0; font-size: 28px; font-weight: 300; }
.letter { fill: #d0d0d0; font-size: 36px; font-weight: 300; }
.room { fill: #fff; font-size: 12px; }
.cell { fill: #fff; font-size: 14px; }
.code { fill: #d8d8d8; font-size: 34px; font-weight: 300; }
.ucs { font-size: 18px; }
```
